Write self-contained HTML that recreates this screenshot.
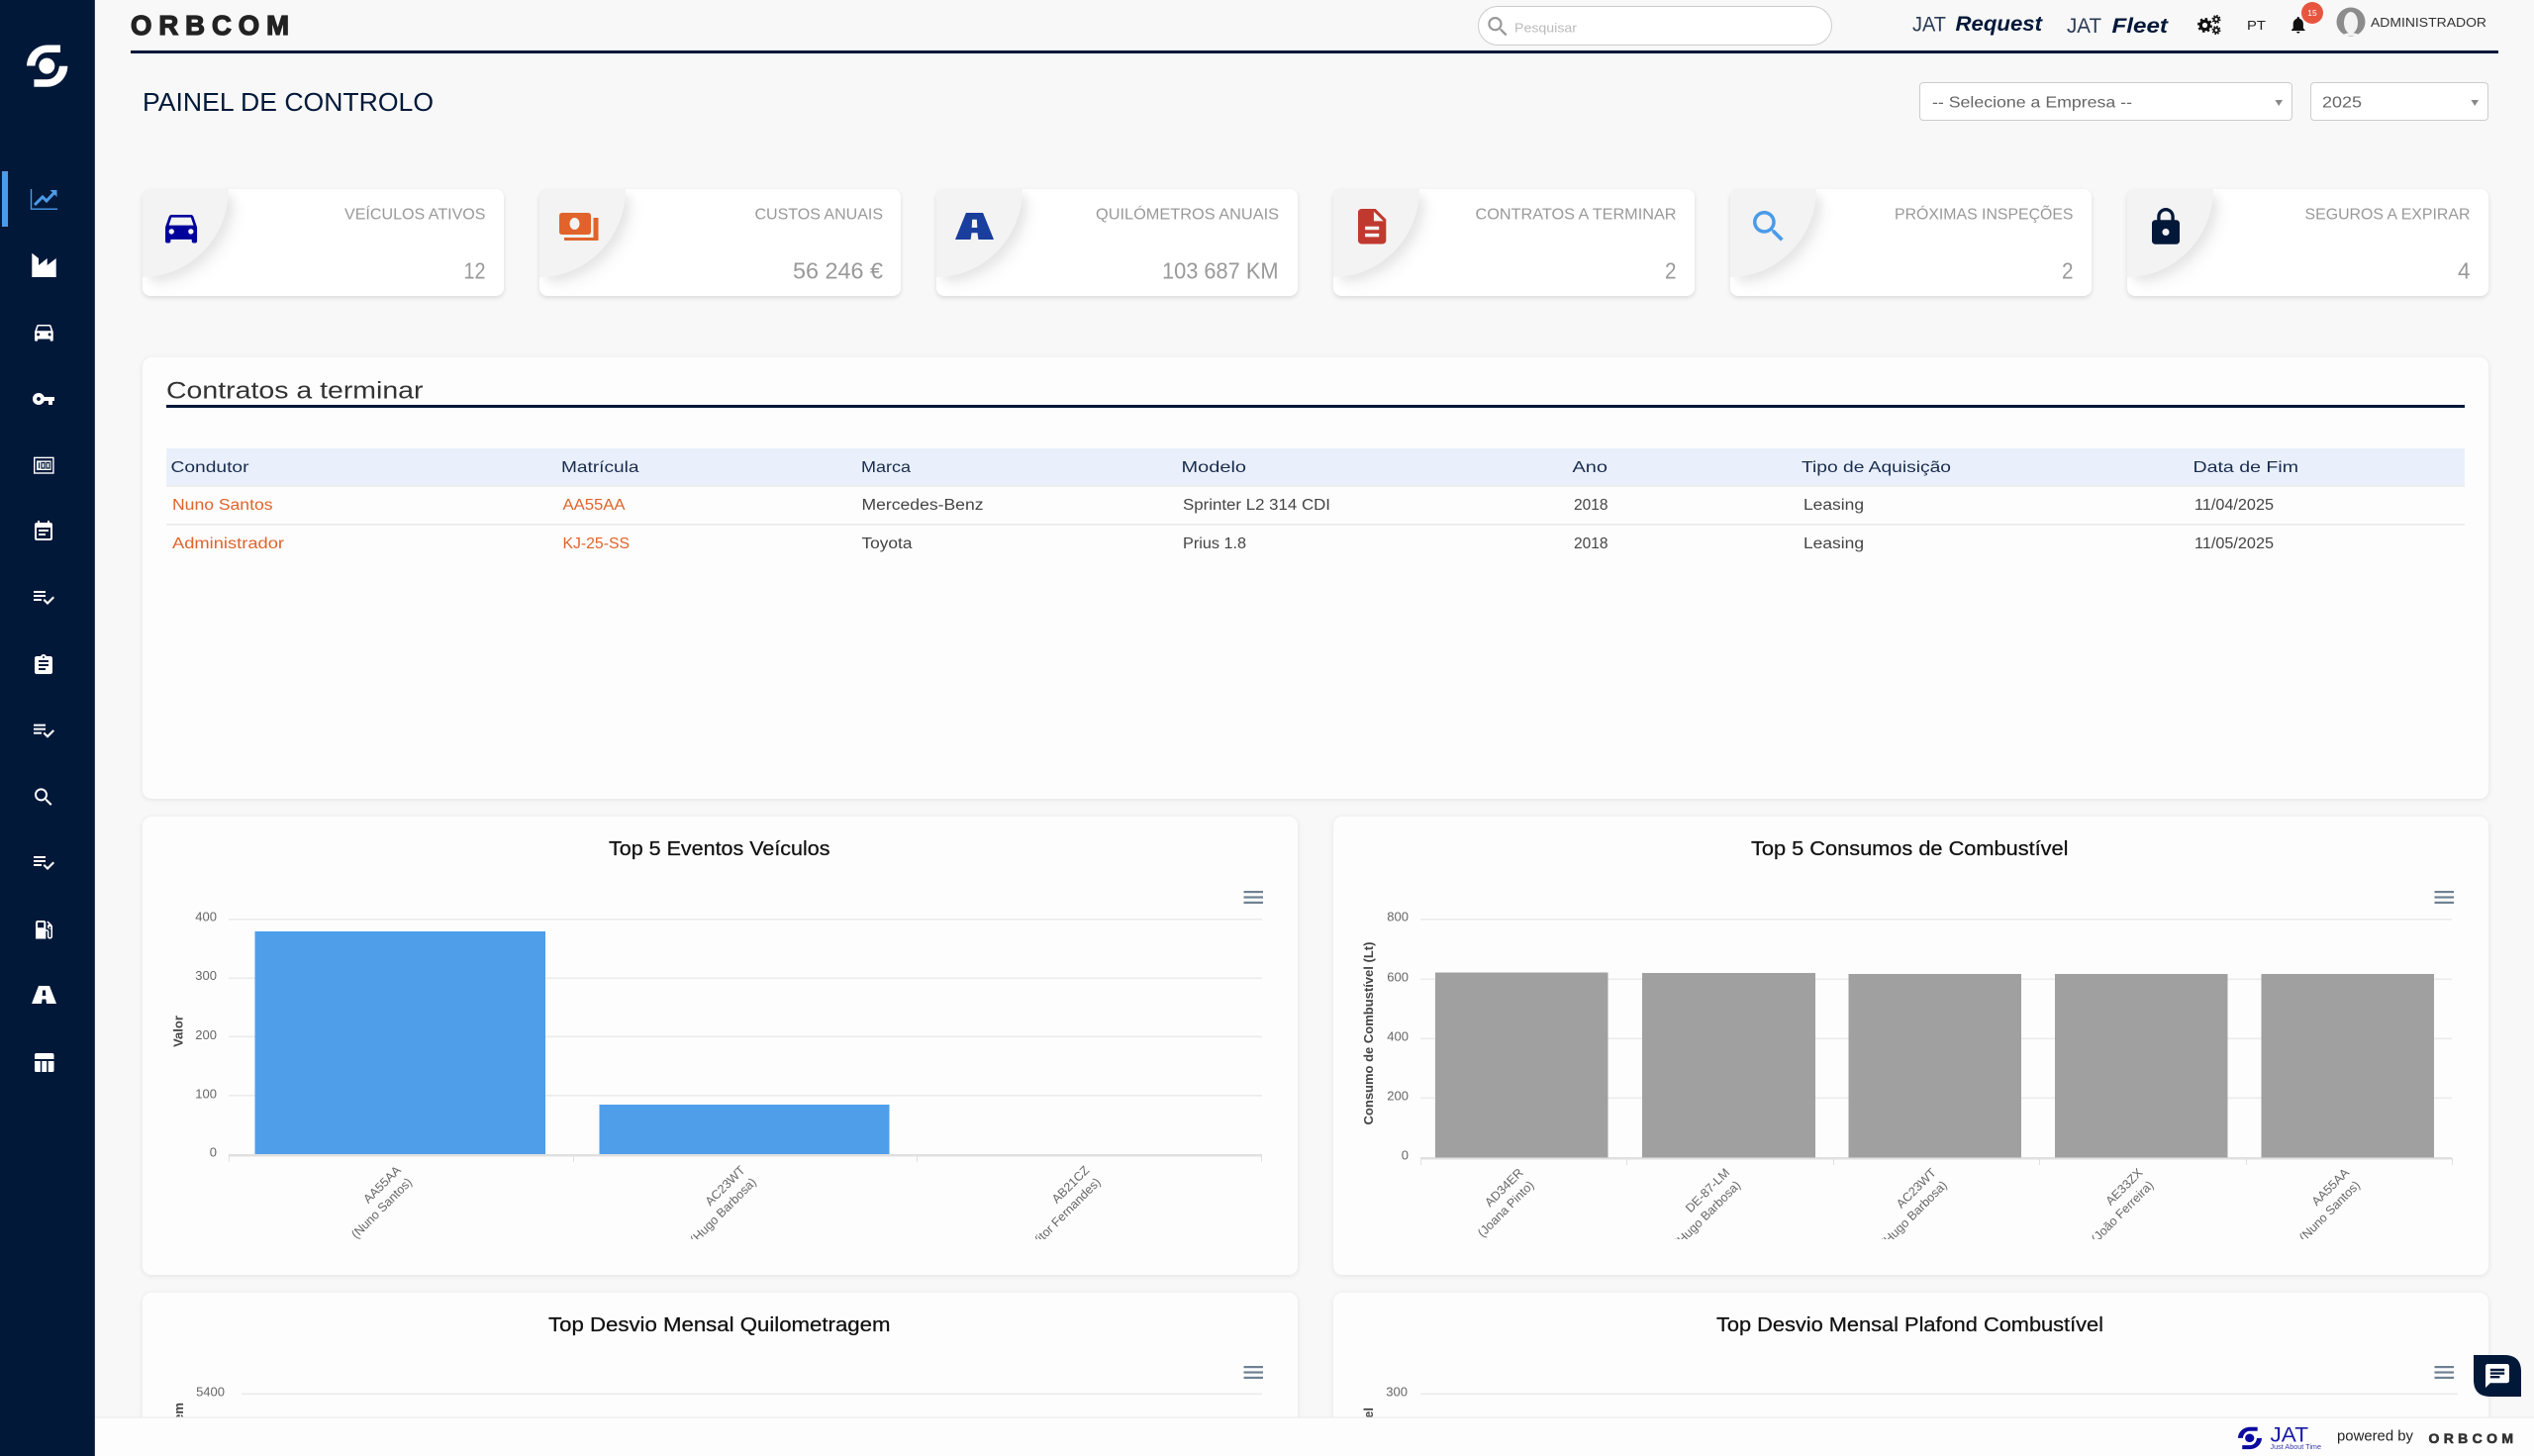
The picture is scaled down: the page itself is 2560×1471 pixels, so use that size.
<!DOCTYPE html>
<html lang="pt"><head><meta charset="utf-8"><title>Painel de Controlo</title>
<style>
html,body{margin:0;padding:0;width:2560px;height:1471px;overflow:hidden;background:#f8f8f8;font-family:"Liberation Sans",sans-serif}
.a{position:absolute;box-sizing:border-box}
.side{left:0;top:0;width:96px;height:1471px;background:#021839;border-right:1px solid #2c3f5e}
.card{top:191px;width:365px;height:108px;background:#fff;border-radius:8px;box-shadow:0 2px 5px rgba(0,0,0,.12);overflow:hidden}
.card i{position:absolute;left:0;top:0;width:87px;height:89px;background:#f3f3f3;border-bottom-right-radius:87px 89px;box-shadow:5px 5px 9px rgba(0,0,0,.07),12px 12px 12px rgba(0,0,0,.03)}
.panel{background:#fdfdfd;border-radius:9px;box-shadow:0 1px 6px rgba(0,0,0,.09)}
.sel{background:#fff;border:1px solid #ccc;border-radius:4px;top:83px;height:39px}
svg{position:absolute;left:0;top:0}
</style></head><body>
<div class="a" style="left:132px;top:51px;width:2392px;height:3px;background:#021839"></div>
<div class="a" style="left:1493px;top:6px;width:358px;height:40px;background:#fff;border:1px solid #ccc;border-radius:20px"></div>
<div class="a sel" style="left:1939px;width:377px"></div>
<div class="a sel" style="left:2334px;width:180px"></div>
<div class="a card" style="left:144px"><i></i></div>
<div class="a card" style="left:545px"><i></i></div>
<div class="a card" style="left:946px"><i></i></div>
<div class="a card" style="left:1347px"><i></i></div>
<div class="a card" style="left:1748px"><i></i></div>
<div class="a card" style="left:2149px"><i></i></div>
<div class="a panel" style="left:144px;top:361px;width:2370px;height:446px"></div>
<div class="a panel" style="left:144px;top:825px;width:1167px;height:463px"></div>
<div class="a panel" style="left:1347px;top:825px;width:1167px;height:463px"></div>
<div class="a panel" style="left:144px;top:1306px;width:1167px;height:140px"></div>
<div class="a panel" style="left:1347px;top:1306px;width:1167px;height:140px"></div>
<div class="a" style="left:168px;top:453px;width:2322px;height:37px;background:#e9f0fc"></div>
<div class="a" style="left:168px;top:490px;width:2322px;height:2px;background:#eeeeee"></div>
<div class="a" style="left:168px;top:529px;width:2322px;height:2px;background:#eeeeee"></div>
<div class="a" style="left:168px;top:409px;width:2322px;height:2.5px;background:#021839"></div>
<div class="a side"></div>
<div class="a" style="left:2px;top:173px;width:6px;height:56px;background:#4a9be8"></div>

<svg width="2560" height="1471" viewBox="0 0 2560 1471" font-family="'Liberation Sans',sans-serif">
<defs>
<path id="car" d="M18.92 6.01C18.72 5.42 18.16 5 17.5 5h-11c-.66 0-1.21.42-1.42 1.01L3 12v8c0 .55.45 1 1 1h1c.55 0 1-.45 1-1v-1h12v1c0 .55.45 1 1 1h1c.55 0 1-.45 1-1v-8l-2.08-5.99zM6.5 16c-.83 0-1.5-.67-1.5-1.5S5.67 13 6.5 13s1.5.67 1.5 1.5S7.33 16 6.5 16zm11 0c-.83 0-1.5-.67-1.5-1.5s.67-1.5 1.5-1.5 1.5.67 1.5 1.5-.67 1.5-1.5 1.5zM5 11l1.5-4.5h11L19 11H5z"/>
<path id="pl" d="M14 10H2v2h12v-2zm0-4H2v2h12V6zM2 16h8v-2H2v2zm19.5-4.5L23 13l-6.99 7-4.51-4.5L13 14l3.01 3 5.49-5.5z"/>
<path id="sr" d="M15.5 14h-.79l-.28-.27C15.41 12.59 16 11.11 16 9.5 16 5.91 13.09 3 9.5 3S3 5.91 3 9.5 5.91 16 9.5 16c1.61 0 3.09-.59 4.23-1.57l.27.28v.79l5 4.99L20.49 19l-4.99-5zm-6 0C7.01 14 5 11.99 5 9.5S7.01 5 9.5 5 14 7.01 14 9.5 11.99 14 9.5 14z"/>
<path id="rd" fill-rule="evenodd" d="M7 0H18L25 18H15L14.4 13.5H10.6L10 18H0ZM11 4.5L10.7 10H14.3L14 4.5Z"/>
<path id="lg" d="M27 66.5C27.5 54 37 45.5 48 45.5H61V53H48C41 53 36.5 58.5 35.5 66.5Z"/>
<g id="lgo"><use href="#lg"/><use href="#lg" transform="rotate(180 47.7 66.6)"/><circle cx="47.3" cy="66.6" r="8"/></g>
<g id="menu"><rect x="0" y="0" width="19.5" height="2.2"/><rect x="0" y="5.4" width="19.5" height="2.2"/><rect x="0" y="10.8" width="19.5" height="2.2"/></g>
<clipPath id="c1"><rect x="150" y="1170" width="2360" height="82"/></clipPath>
<clipPath id="c2"><rect x="150" y="1400" width="2360" height="32"/></clipPath>
</defs>

<!-- sidebar -->
<use href="#lgo" fill="#fff"/>
<g fill="none" stroke="#4a9be8"><path d="M31.5 191V211.2H58" stroke-width="1.4"/><path d="M35 207L43 199L47 203L54.5 195" stroke-width="3"/></g><path d="M50.5 192H57.5V199Z" fill="#4a9be8"/>
<path d="M32.3 280V255.7L39 261V268L47.7 261V268L56.7 261V280Z" fill="#fff"/>
<g fill="#fff">
<use href="#car" transform="translate(31.9 322.8) scale(1.04)"/>
<path transform="translate(32 391)" d="M12.65 10C11.83 7.67 9.61 6 7 6c-3.31 0-6 2.69-6 6s2.69 6 6 6c2.61 0 4.83-1.67 5.65-4H17v4h4v-4h2v-4H12.65zM7 14c-1.1 0-2-.9-2-2s.9-2 2-2 2 .9 2 2-.9 2-2 2z"/>
<path transform="translate(32 525)" d="M17 10H7v2h10v-2zm2-7h-1V1h-2v2H8V1H6v2H5c-1.11 0-1.99.9-1.99 2L3 19c0 1.1.89 2 2 2h14c1.1 0 2-.9 2-2V5c0-1.1-.9-2-2-2zm0 16H5V8h14v11zm-5-5H7v2h7v-2z"/>
<use href="#pl" transform="translate(32 591)"/>
<path transform="translate(32 660)" d="M19 3h-4.18C14.4 1.84 13.3 1 12 1c-1.3 0-2.4.84-2.82 2H5c-1.1 0-2 .9-2 2v14c0 1.1.9 2 2 2h14c1.1 0 2-.9 2-2V5c0-1.1-.9-2-2-2zm-7 0c.55 0 1 .45 1 1s-.45 1-1 1-1-.45-1-1 .45-1 1-1zm2 14H7v-2h7v2zm3-4H7v-2h10v2zm0-4H7V7h10v2z"/>
<use href="#pl" transform="translate(32 725.6)"/>
<use href="#sr" transform="translate(32 793.4)"/>
<use href="#pl" transform="translate(32 859)"/>
<path transform="translate(31.9 926.9) scale(1.03)" d="M19.77 7.23l.01-.01-3.72-3.72L15 4.56l2.11 2.11c-.94.36-1.61 1.26-1.61 2.33 0 1.38 1.12 2.5 2.5 2.5.36 0 .69-.08 1-.21v7.21c0 .55-.45 1-1 1s-1-.45-1-1V14c0-1.1-.9-2-2-2h-1V5c0-1.1-.9-2-2-2H6c-1.1 0-2 .9-2 2v16h10v-7.5h1.5v5c0 1.38 1.12 2.5 2.5 2.5s2.5-1.12 2.5-2.5V9c0-.69-.28-1.32-.73-1.77zM12 10H6V5h6v5zm6 1c-.55 0-1-.45-1-1s.45-1 1-1 1 .45 1 1-.45 1-1 1z"/>
<use href="#rd" transform="translate(32 996)"/>
<path d="M37 1064H52.5Q54.5 1064 54.5 1066V1070H35V1066Q35 1064 37 1064ZM35 1072H40.8V1083H36.5Q35 1083 35 1081.5ZM42.3 1072H47.2V1083H42.3ZM48.7 1072H54.5V1081.5Q54.5 1083 53 1083H48.7Z"/>
</g>
<rect x="34.7" y="462.4" width="19.2" height="15.6" fill="none" stroke="#fff" stroke-width="1.4"/>
<path d="M37 465.5H51.6V475H37Z" fill="#fff"/><path d="M39.5 467.3V473.2M42 467.5H45V473H42ZM47 467.5H50V473H47Z" fill="none" stroke="#021839" stroke-width="1.2"/>

<!-- header -->
<text x="132" y="35" font-size="27.5" font-weight="700" fill="#222" stroke="#222" stroke-width="1.3" textLength="160" lengthAdjust="spacing">ORBCOM</text>
<use href="#sr" fill="#999" transform="translate(1500 13.7) scale(1.1)"/>
<text x="1530" y="32.5" font-size="13" fill="#bbb" textLength="63" lengthAdjust="spacingAndGlyphs">Pesquisar</text>
<g fill="#021839">
<text x="1932" y="31.5" font-size="21" fill="#2a3a55" textLength="34" lengthAdjust="spacingAndGlyphs">JAT</text>
<text x="1975.5" y="31" font-size="21" font-weight="700" font-style="italic" textLength="87.5" lengthAdjust="spacingAndGlyphs">Request</text>
<text x="2088" y="33" font-size="21" fill="#2a3a55" textLength="35" lengthAdjust="spacingAndGlyphs">JAT</text>
<text x="2133.5" y="33" font-size="21" font-weight="700" font-style="italic" textLength="56.5" lengthAdjust="spacingAndGlyphs">Fleet</text>
</g>
<g fill="none" stroke="#111">
<circle cx="2227.5" cy="25.5" r="4.2" stroke-width="3.2"/><circle cx="2227.5" cy="25.5" r="6.5" stroke-width="2" stroke-dasharray="2.5 2.6"/>
<circle cx="2239" cy="19.5" r="2.3" stroke-width="1.8"/><circle cx="2239" cy="19.5" r="3.8" stroke-width="1.4" stroke-dasharray="1.6 1.4"/>
<circle cx="2239" cy="30.5" r="2.3" stroke-width="1.8"/><circle cx="2239" cy="30.5" r="3.8" stroke-width="1.4" stroke-dasharray="1.6 1.4"/>
</g>
<text x="2270" y="30" font-size="13" fill="#222" textLength="19" lengthAdjust="spacingAndGlyphs">PT</text>
<path transform="translate(2311.6 14.9) scale(.85)" fill="#111" d="M12 22c1.1 0 2-.9 2-2h-4c0 1.1.89 2 2 2zm6-6v-5c0-3.07-1.64-5.64-4.5-6.32V4c0-.83-.67-1.5-1.5-1.5s-1.5.67-1.5 1.5v.68C7.63 5.36 6 7.92 6 11v5l-2 2v1h16v-1l-2-2z"/>
<circle cx="2336" cy="13" r="11" fill="#e8553f"/>
<text x="2336" y="16" font-size="8.5" fill="#fff" text-anchor="middle">15</text>
<circle cx="2375" cy="22" r="14.5" fill="#8c8c8c"/><ellipse cx="2375" cy="23" rx="7" ry="11" fill="#f3f3f3"/><path d="M2365 36Q2375 30 2385 36Z" fill="#f3f3f3"/>
<text x="2395" y="27" font-size="13" fill="#333" textLength="117" lengthAdjust="spacingAndGlyphs">ADMINISTRADOR</text>

<!-- title + selects -->
<text x="144" y="112" font-size="26" fill="#021839" textLength="294" lengthAdjust="spacingAndGlyphs">PAINEL DE CONTROLO</text>
<text x="1952" y="108.5" font-size="16" fill="#666" textLength="202" lengthAdjust="spacingAndGlyphs">-- Selecione a Empresa --</text>
<text x="2346" y="108.5" font-size="16" fill="#666" textLength="40" lengthAdjust="spacingAndGlyphs">2025</text>
<path d="M2298.5 101H2306L2302.2 107ZM2496.5 101H2504L2500.2 107Z" fill="#888"/>

<!-- card icons -->
<use href="#car" fill="#00009c" transform="translate(161.7 208.1) scale(1.78)"/>
<g fill="#e0632a"><path fill-rule="evenodd" d="M568 215H594Q597 215 597 218V234Q597 237 594 237H568Q565 237 565 234V218Q565 215 568 215ZM580.5 220C577.5 220 575.5 223 575.5 226S577.5 232 580.5 232S585.5 229 585.5 226S583.5 220 580.5 220Z"/><path d="M599.5 220H604.5V243H570V240H599.5Z"/></g>
<use href="#rd" fill="#1a3e9e" transform="translate(965 215) scale(1.56 1.5)"/>
<path fill="#c0392f" transform="translate(1364.9 207.5) scale(1.77)" d="M14 2H6c-1.1 0-1.99.9-1.99 2L4 20c0 1.1.89 2 1.99 2H18c1.1 0 2-.9 2-2V8l-6-6zm2 16H8v-2h8v2zm0-4H8v-2h8v2zm-3-5V3.5L18.5 9H13z"/>
<use href="#sr" fill="#4a9be8" transform="translate(1765.75 207.75) scale(1.75)"/>
<path fill="#021839" transform="translate(2167 208.25) scale(1.75)" d="M18 8h-1V6c0-2.76-2.24-5-5-5S7 3.24 7 6v2H6c-1.1 0-2 .9-2 2v10c0 1.1.9 2 2 2h12c1.1 0 2-.9 2-2V10c0-1.1-.9-2-2-2zm-6 9c-1.1 0-2-.9-2-2s.9-2 2-2 2 .9 2 2-.9 2-2 2zm3.1-9H8.9V6c0-1.71 1.39-3.1 3.1-3.1 1.71 0 3.1 1.39 3.1 3.1v2z"/>

<!-- card text -->
<g font-size="16" fill="#999">
<text x="348" y="221.5" textLength="142.5" lengthAdjust="spacingAndGlyphs">VEÍCULOS ATIVOS</text>
<text x="762.5" y="221.5" textLength="129.5" lengthAdjust="spacingAndGlyphs">CUSTOS ANUAIS</text>
<text x="1107" y="221.5" textLength="185" lengthAdjust="spacingAndGlyphs">QUILÓMETROS ANUAIS</text>
<text x="1490.5" y="221.5" textLength="203" lengthAdjust="spacingAndGlyphs">CONTRATOS A TERMINAR</text>
<text x="1914" y="221.5" textLength="180.5" lengthAdjust="spacingAndGlyphs">PRÓXIMAS INSPEÇÕES</text>
<text x="2328.5" y="221.5" textLength="167" lengthAdjust="spacingAndGlyphs">SEGUROS A EXPIRAR</text>
</g>
<g font-size="23" fill="#999">
<text x="468.5" y="281.5" textLength="22" lengthAdjust="spacingAndGlyphs">12</text>
<text x="801" y="281.5" textLength="91" lengthAdjust="spacingAndGlyphs">56 246 €</text>
<text x="1174" y="281.5" textLength="117.5" lengthAdjust="spacingAndGlyphs">103 687 KM</text>
<text x="1682" y="281.5" textLength="11.5" lengthAdjust="spacingAndGlyphs">2</text>
<text x="2083" y="281.5" textLength="11.5" lengthAdjust="spacingAndGlyphs">2</text>
<text x="2483" y="281.5" textLength="12.5" lengthAdjust="spacingAndGlyphs">4</text>
</g>

<!-- table -->
<text x="168" y="402.5" font-size="24" fill="#333" textLength="259.5" lengthAdjust="spacingAndGlyphs">Contratos a terminar</text>
<g font-size="16" fill="#1a2c4c">
<text x="172.5" y="477" textLength="79" lengthAdjust="spacingAndGlyphs">Condutor</text>
<text x="567" y="477" textLength="78.5" lengthAdjust="spacingAndGlyphs">Matrícula</text>
<text x="870" y="477" textLength="50" lengthAdjust="spacingAndGlyphs">Marca</text>
<text x="1193.5" y="477" textLength="65.5" lengthAdjust="spacingAndGlyphs">Modelo</text>
<text x="1588.5" y="477" textLength="35.5" lengthAdjust="spacingAndGlyphs">Ano</text>
<text x="1820" y="477" textLength="151" lengthAdjust="spacingAndGlyphs">Tipo de Aquisição</text>
<text x="2215.5" y="477" textLength="106.5" lengthAdjust="spacingAndGlyphs">Data de Fim</text>
</g>
<g font-size="15.5" fill="#e0632a">
<text x="174" y="515" textLength="101.5" lengthAdjust="spacingAndGlyphs">Nuno Santos</text>
<text x="568.5" y="515" textLength="63" lengthAdjust="spacingAndGlyphs">AA55AA</text>
<text x="174" y="554" textLength="113" lengthAdjust="spacingAndGlyphs">Administrador</text>
<text x="568.5" y="554" textLength="67.5" lengthAdjust="spacingAndGlyphs">KJ-25-SS</text>
</g>
<g font-size="15.5" fill="#444">
<text x="870.5" y="515" textLength="123" lengthAdjust="spacingAndGlyphs">Mercedes-Benz</text>
<text x="1195" y="515" textLength="149" lengthAdjust="spacingAndGlyphs">Sprinter L2 314 CDI</text>
<text x="1590" y="515" textLength="34.5" lengthAdjust="spacingAndGlyphs">2018</text>
<text x="1822" y="515" textLength="61" lengthAdjust="spacingAndGlyphs">Leasing</text>
<text x="2217" y="515" textLength="80" lengthAdjust="spacingAndGlyphs">11/04/2025</text>
<text x="870.5" y="554" textLength="51" lengthAdjust="spacingAndGlyphs">Toyota</text>
<text x="1195" y="554" textLength="64" lengthAdjust="spacingAndGlyphs">Prius 1.8</text>
<text x="1590" y="554" textLength="34.5" lengthAdjust="spacingAndGlyphs">2018</text>
<text x="1822" y="554" textLength="61" lengthAdjust="spacingAndGlyphs">Leasing</text>
<text x="2217" y="554" textLength="80" lengthAdjust="spacingAndGlyphs">11/05/2025</text>
</g>

<!-- chart titles -->
<g font-size="20" fill="#111" stroke="#111" stroke-width=".25">
<text x="615" y="864" textLength="223.5" lengthAdjust="spacingAndGlyphs">Top 5 Eventos Veículos</text>
<text x="1769" y="864" textLength="320.5" lengthAdjust="spacingAndGlyphs">Top 5 Consumos de Combustível</text>
<text x="554" y="1345" textLength="345.5" lengthAdjust="spacingAndGlyphs">Top Desvio Mensal Quilometragem</text>
<text x="1734" y="1345" textLength="391" lengthAdjust="spacingAndGlyphs">Top Desvio Mensal Plafond Combustível</text>
</g>
<g fill="#6e8192">
<use href="#menu" transform="translate(1256.5 900)"/>
<use href="#menu" transform="translate(2459.5 900)"/>
<use href="#menu" transform="translate(1256.5 1380)"/>
<use href="#menu" transform="translate(2459.5 1380)"/>
</g>

<!-- chart 1 -->
<g fill="#ececec">
<rect x="231" y="928" width="1044" height="1.6"/><rect x="231" y="987.5" width="1044" height="1.6"/><rect x="231" y="1046.5" width="1044" height="1.6"/><rect x="231" y="1106" width="1044" height="1.6"/>
</g>
<rect x="231" y="1166" width="1044" height="2.5" fill="#e0e0e0"/>
<g fill="#e0e0e0"><rect x="231" y="1167" width="1" height="7"/><rect x="579" y="1167" width="1" height="7"/><rect x="926" y="1167" width="1" height="7"/><rect x="1274" y="1167" width="1" height="7"/></g>
<rect x="257.5" y="941" width="293.5" height="225" fill="#4f9eea"/>
<rect x="605.5" y="1116" width="293" height="50" fill="#4f9eea"/>
<g font-size="13" fill="#666" text-anchor="end">
<text x="219" y="930.5">400</text><text x="219" y="990">300</text><text x="219" y="1050">200</text><text x="219" y="1109.5">100</text><text x="219" y="1168.5">0</text>
</g>
<text transform="rotate(-90 184.5 1042)" x="184.5" y="1042" font-size="13" font-weight="700" fill="#444" text-anchor="middle">Valor</text>
<g font-size="12.5" fill="#666" text-anchor="end" clip-path="url(#c1)">
<text x="405.6" y="1183" transform="rotate(-45 405.6 1183)">AA55AA</text>
<text x="417" y="1195" transform="rotate(-45 417 1195)">(Nuno Santos)</text>
<text x="753.4" y="1183" transform="rotate(-45 753.4 1183)">AC23WT</text>
<text x="764.8" y="1195" transform="rotate(-45 764.8 1195)">(Hugo Barbosa)</text>
<text x="1101.2" y="1183" transform="rotate(-45 1101.2 1183)">AB21CZ</text>
<text x="1112.6" y="1195" transform="rotate(-45 1112.6 1195)">(Vitor Fernandes)</text>
</g>

<!-- chart 2 -->
<g fill="#ececec">
<rect x="1435" y="928" width="1042" height="1.6"/><rect x="1435" y="988.5" width="1042" height="1.6"/><rect x="1435" y="1048.5" width="1042" height="1.6"/><rect x="1435" y="1108.5" width="1042" height="1.6"/>
</g>
<rect x="1435" y="1169" width="1042" height="2.5" fill="#e0e0e0"/>
<g fill="#e0e0e0"><rect x="1435" y="1170" width="1" height="7"/><rect x="1643" y="1170" width="1" height="7"/><rect x="1852" y="1170" width="1" height="7"/><rect x="2060" y="1170" width="1" height="7"/><rect x="2269" y="1170" width="1" height="7"/><rect x="2477" y="1170" width="1" height="7"/></g>
<g fill="#a0a0a0">
<rect x="1450" y="982.5" width="174.5" height="187"/><rect x="1659" y="983" width="175" height="186.5"/><rect x="1867.5" y="984" width="174.5" height="185.5"/><rect x="2076" y="984" width="174.5" height="185.5"/><rect x="2284.5" y="984" width="174.5" height="185.5"/>
</g>
<g font-size="13" fill="#666" text-anchor="end">
<text x="1423" y="930.5">800</text><text x="1423" y="991.5">600</text><text x="1423" y="1051.5">400</text><text x="1423" y="1111.5">200</text><text x="1423" y="1171.5">0</text>
</g>
<text transform="rotate(-90 1387 1044)" x="1387" y="1044" font-size="13" font-weight="700" fill="#444" text-anchor="middle">Consumo de Combustível (Lt)</text>
<g font-size="12.5" fill="#666" text-anchor="end" clip-path="url(#c1)">
<text x="1539.5" y="1185.5" transform="rotate(-45 1539.5 1185.5)">AD34ER</text>
<text x="1550.5" y="1198" transform="rotate(-45 1550.5 1198)">(Joana Pinto)</text>
<text x="1748.1" y="1185.5" transform="rotate(-45 1748.1 1185.5)">DE-87-LM</text>
<text x="1759.1" y="1198" transform="rotate(-45 1759.1 1198)">(Hugo Barbosa)</text>
<text x="1956.7" y="1185.5" transform="rotate(-45 1956.7 1185.5)">AC23WT</text>
<text x="1967.7" y="1198" transform="rotate(-45 1967.7 1198)">(Hugo Barbosa)</text>
<text x="2165.3" y="1185.5" transform="rotate(-45 2165.3 1185.5)">AE33ZX</text>
<text x="2176.3" y="1198" transform="rotate(-45 2176.3 1198)">(João Ferreira)</text>
<text x="2373.9" y="1185.5" transform="rotate(-45 2373.9 1185.5)">AA55AA</text>
<text x="2384.9" y="1198" transform="rotate(-45 2384.9 1198)">(Nuno Santos)</text>
</g>

<!-- bottom charts -->
<rect x="244" y="1407.5" width="1031" height="1.6" fill="#ececec"/>
<rect x="1435" y="1407.5" width="1048" height="1.6" fill="#ececec"/>
<text x="227" y="1410.5" font-size="13" fill="#666" text-anchor="end">5400</text>
<text x="1422" y="1410.5" font-size="13" fill="#666" text-anchor="end">300</text>
<g clip-path="url(#c2)" font-size="13" font-weight="700" fill="#444" text-anchor="end">
<text transform="rotate(-90 185 1417)" x="185" y="1417">gem</text>
<text transform="rotate(-90 1387 1422)" x="1387" y="1422">ível</text>
</g>

<!-- footer -->
<rect x="96" y="1432" width="2464" height="39" fill="#fdfdfd"/>
<rect x="96" y="1431.5" width="2464" height="1.2" fill="#ececec"/>
<use href="#lgo" fill="#0b0ba0" transform="translate(2245.3 1417.6) scale(.58 .53)"/>
<text x="2293.5" y="1456.5" font-size="21" fill="#1a1aa8" textLength="38.5" lengthAdjust="spacingAndGlyphs">JAT</text>
<text x="2293.5" y="1464" font-size="7.5" fill="#3a3ab0" textLength="51.5" lengthAdjust="spacingAndGlyphs">Just About Time</text>
<text x="2361" y="1455.5" font-size="15" fill="#222" textLength="77" lengthAdjust="spacingAndGlyphs">powered by</text>
<text x="2453.5" y="1458" font-size="14" font-weight="700" fill="#333" stroke="#333" stroke-width=".6" textLength="85.5" lengthAdjust="spacing">ORBCOM</text>

<!-- chat -->
<path d="M2499 1369H2530Q2547 1369 2547 1386V1411H2516Q2499 1411 2499 1394Z" fill="#021839"/>
<path transform="translate(2508.6 1375.6) scale(1.2)" fill="#fff" d="M20 2H4c-1.1 0-1.99.9-1.99 2L2 22l4-4h14c1.1 0 2-.9 2-2V4c0-1.1-.9-2-2-2zM6 9h12v2H6V9zm8 5H6v-2h8v2zm4-6H6V6h12v2z"/>
</svg>
</body></html>
